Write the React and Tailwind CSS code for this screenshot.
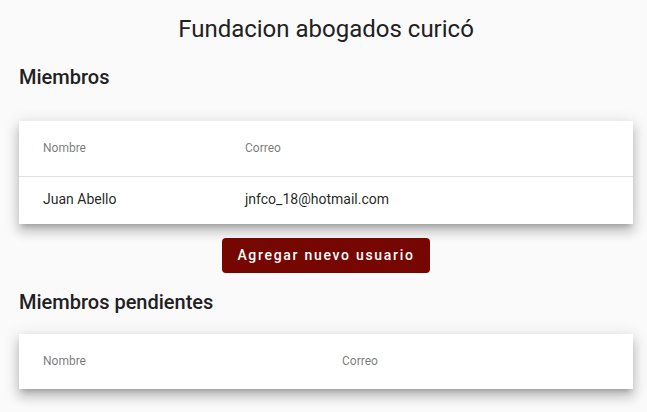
const miembros = [{ nombre: 'Juan Abello', correo: 'jnfco_18@hotmail.com' }]

function Tabla({ rows, correoCol }) {
  return (
    <div className="bg-white shadow-[0_5px_5px_-3px_rgba(0,0,0,0.2),0_8px_10px_1px_rgba(0,0,0,0.14),0_3px_14px_2px_rgba(0,0,0,0.12)]">
      <div className="flex items-center h-[55px] pl-6 pb-[2px] text-[12px] text-black/55">
        <div style={{ width: correoCol }}>Nombre</div>
        <div>Correo</div>
      </div>
      {rows.map((r) => (
        <div key={r.correo} className="flex items-center h-[48px] pl-6 pb-[2px] border-t border-black/12 text-[14px] text-black/87">
          <div style={{ width: correoCol }}>{r.nombre}</div>
          <div>{r.correo}</div>
        </div>
      ))}
    </div>
  )
}

export default function App() {
  return (
    <div className="min-h-screen bg-[#fafafa] pl-[19px] pr-[14px] pt-[13px] font-['Roboto',sans-serif] text-black/87">
      {/* Title */}
      <h1 className="text-[24px] leading-8 text-center text-[#212121]">Fundacion abogados curicó</h1>

      {/* Miembros */}
      <h2 className="mt-4 text-[20px] leading-8 font-medium text-[#212121]">Miembros</h2>
      <div className="mt-[28px]">
        <Tabla rows={miembros} correoCol={202} />
      </div>

      <div className="flex justify-center mt-[14px]">
        <button className="w-[208px] h-[35px] rounded bg-[#760600] text-white text-[14px] font-medium tracking-[1.7px]">
          Agregar nuevo usuario
        </button>
      </div>

      {/* Pendientes */}
      <h2 className="mt-[13px] text-[20px] leading-8 font-medium text-[#212121]">Miembros pendientes</h2>
      <div className="mt-4">
        <Tabla rows={[]} correoCol={299} />
      </div>
    </div>
  )
}
